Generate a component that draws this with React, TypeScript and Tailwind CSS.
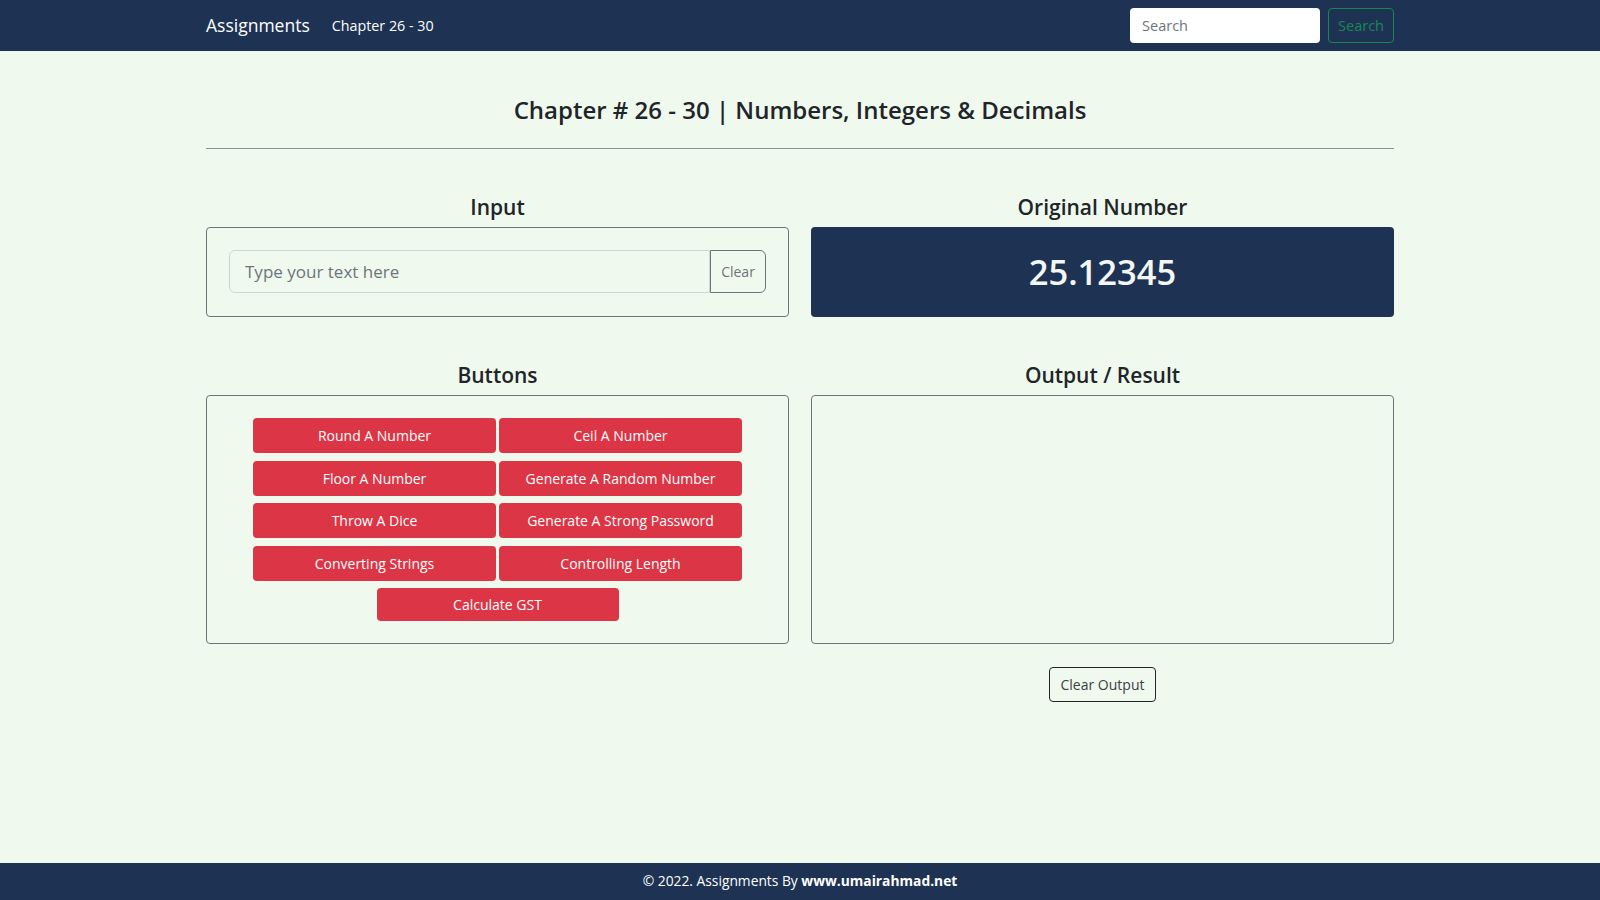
import { useState } from 'react'

const buttons = [
    'Round A Number',
    'Ceil A Number',
    'Floor A Number',
    'Generate A Random Number',
    'Throw A Dice',
    'Generate A Strong Password',
    'Converting Strings',
    'Controlling Length',
]

export default function App() {
    const [text, setText] = useState('')
    const [output, setOutput] = useState('')

    return (
        <div className="min-h-screen flex flex-col bg-[#f0f9ee] text-[#212529] font-['Open_Sans',sans-serif]">
            {/* Navbar */}
            <nav className="h-[51px] bg-[#1e3354] flex items-center">
                <div className="w-[1188px] mx-auto flex items-center">
                    <span className="text-[17.5px] text-white mr-[22px]">Assignments</span>
                    <span className="text-[14.3px] text-white">Chapter 26 - 30</span>
                    <div className="ml-auto flex items-center gap-2">
                        <input
                            type="text"
                            placeholder="Search"
                            className="w-[190px] h-[35px] rounded bg-white px-3 text-[14.5px] outline-none placeholder:text-[#6c757d]"
                        />
                        <button className="h-[35px] px-[9px] rounded border border-[#198754] text-[#198754] text-[14.5px]">
                            Search
                        </button>
                    </div>
                </div>
            </nav>

            {/* Main */}
            <main className="w-[1188px] mx-auto pt-[45px]">
                <h3 className="text-center text-[24px] font-semibold leading-[1.2]">
                    Chapter # 26 - 30 | Numbers, Integers &amp; Decimals
                </h3>
                <hr className="mt-[23px] border-t border-[#8e9491]" />

                <div className="grid grid-cols-2 gap-x-[22px] mt-[46px]">
                    <div>
                        <h4 className="text-center text-[21px] font-semibold leading-[1.2] mb-[7px]">Input</h4>
                        <div className="h-[90px] border border-[#6c757d] rounded px-[22px] flex items-center">
                            <div className="flex w-full h-[43px]">
                                <input
                                    type="text"
                                    value={text}
                                    onChange={(e) => setText(e.target.value)}
                                    placeholder="Type your text here"
                                    className="flex-1 min-w-0 bg-transparent border border-[#ced4da] rounded-l-md px-[15px] text-[17px] outline-none placeholder:text-[#6c757d]"
                                />
                                <button
                                    onClick={() => setText('')}
                                    className="w-[56px] border border-[#6c757d] rounded-r-md text-[14px] text-[#6c757d]"
                                >
                                    Clear
                                </button>
                            </div>
                        </div>
                    </div>
                    <div>
                        <h4 className="text-center text-[21px] font-semibold leading-[1.2] mb-[7px]">Original Number</h4>
                        <div className="h-[90px] bg-[#1e3354] rounded flex items-center justify-center">
                            <span className="text-[34.5px] font-semibold text-[#f3f6f4]">25.12345</span>
                        </div>
                    </div>

                    <div className="mt-[46px]">
                        <h4 className="text-center text-[21px] font-semibold leading-[1.2] mb-[7px]">Buttons</h4>
                        <div className="h-[249px] border border-[#6c757d] rounded py-[22px] flex flex-col items-center">
                            <div className="grid grid-cols-2 gap-x-[3px] gap-y-[7.5px] w-[489px]">
                                {buttons.map((b) => (
                                    <button
                                        key={b}
                                        onClick={() => setOutput(b)}
                                        className="h-[35px] bg-[#dc3545] rounded text-white text-[14px]"
                                    >
                                        {b}
                                    </button>
                                ))}
                            </div>
                            <button
                                onClick={() => setOutput('Calculate GST')}
                                className="mt-[7.5px] w-[242px] h-[35px] bg-[#dc3545] rounded text-white text-[14px]"
                            >
                                Calculate GST
                            </button>
                        </div>
                    </div>
                    <div className="mt-[46px]">
                        <h4 className="text-center text-[21px] font-semibold leading-[1.2] mb-[7px]">Output / Result</h4>
                        <div className="h-[249px] border border-[#6c757d] rounded p-4 text-[16px]">{output}</div>
                        <div className="flex justify-center mt-[23px]">
                            <button
                                onClick={() => setOutput('')}
                                className="h-[35px] px-[11px] border border-[#212529] rounded text-[14px] text-[#3a3f44]"
                            >
                                Clear Output
                            </button>
                        </div>
                    </div>
                </div>
            </main>

            {/* Footer */}
            <footer className="mt-auto h-[37px] bg-[#1e3354] flex items-center justify-center text-white text-[13.8px]">
                <span>
                    © 2022. Assignments By <b className="font-bold">www.umairahmad.net</b>
                </span>
            </footer>
        </div>
    )
}
